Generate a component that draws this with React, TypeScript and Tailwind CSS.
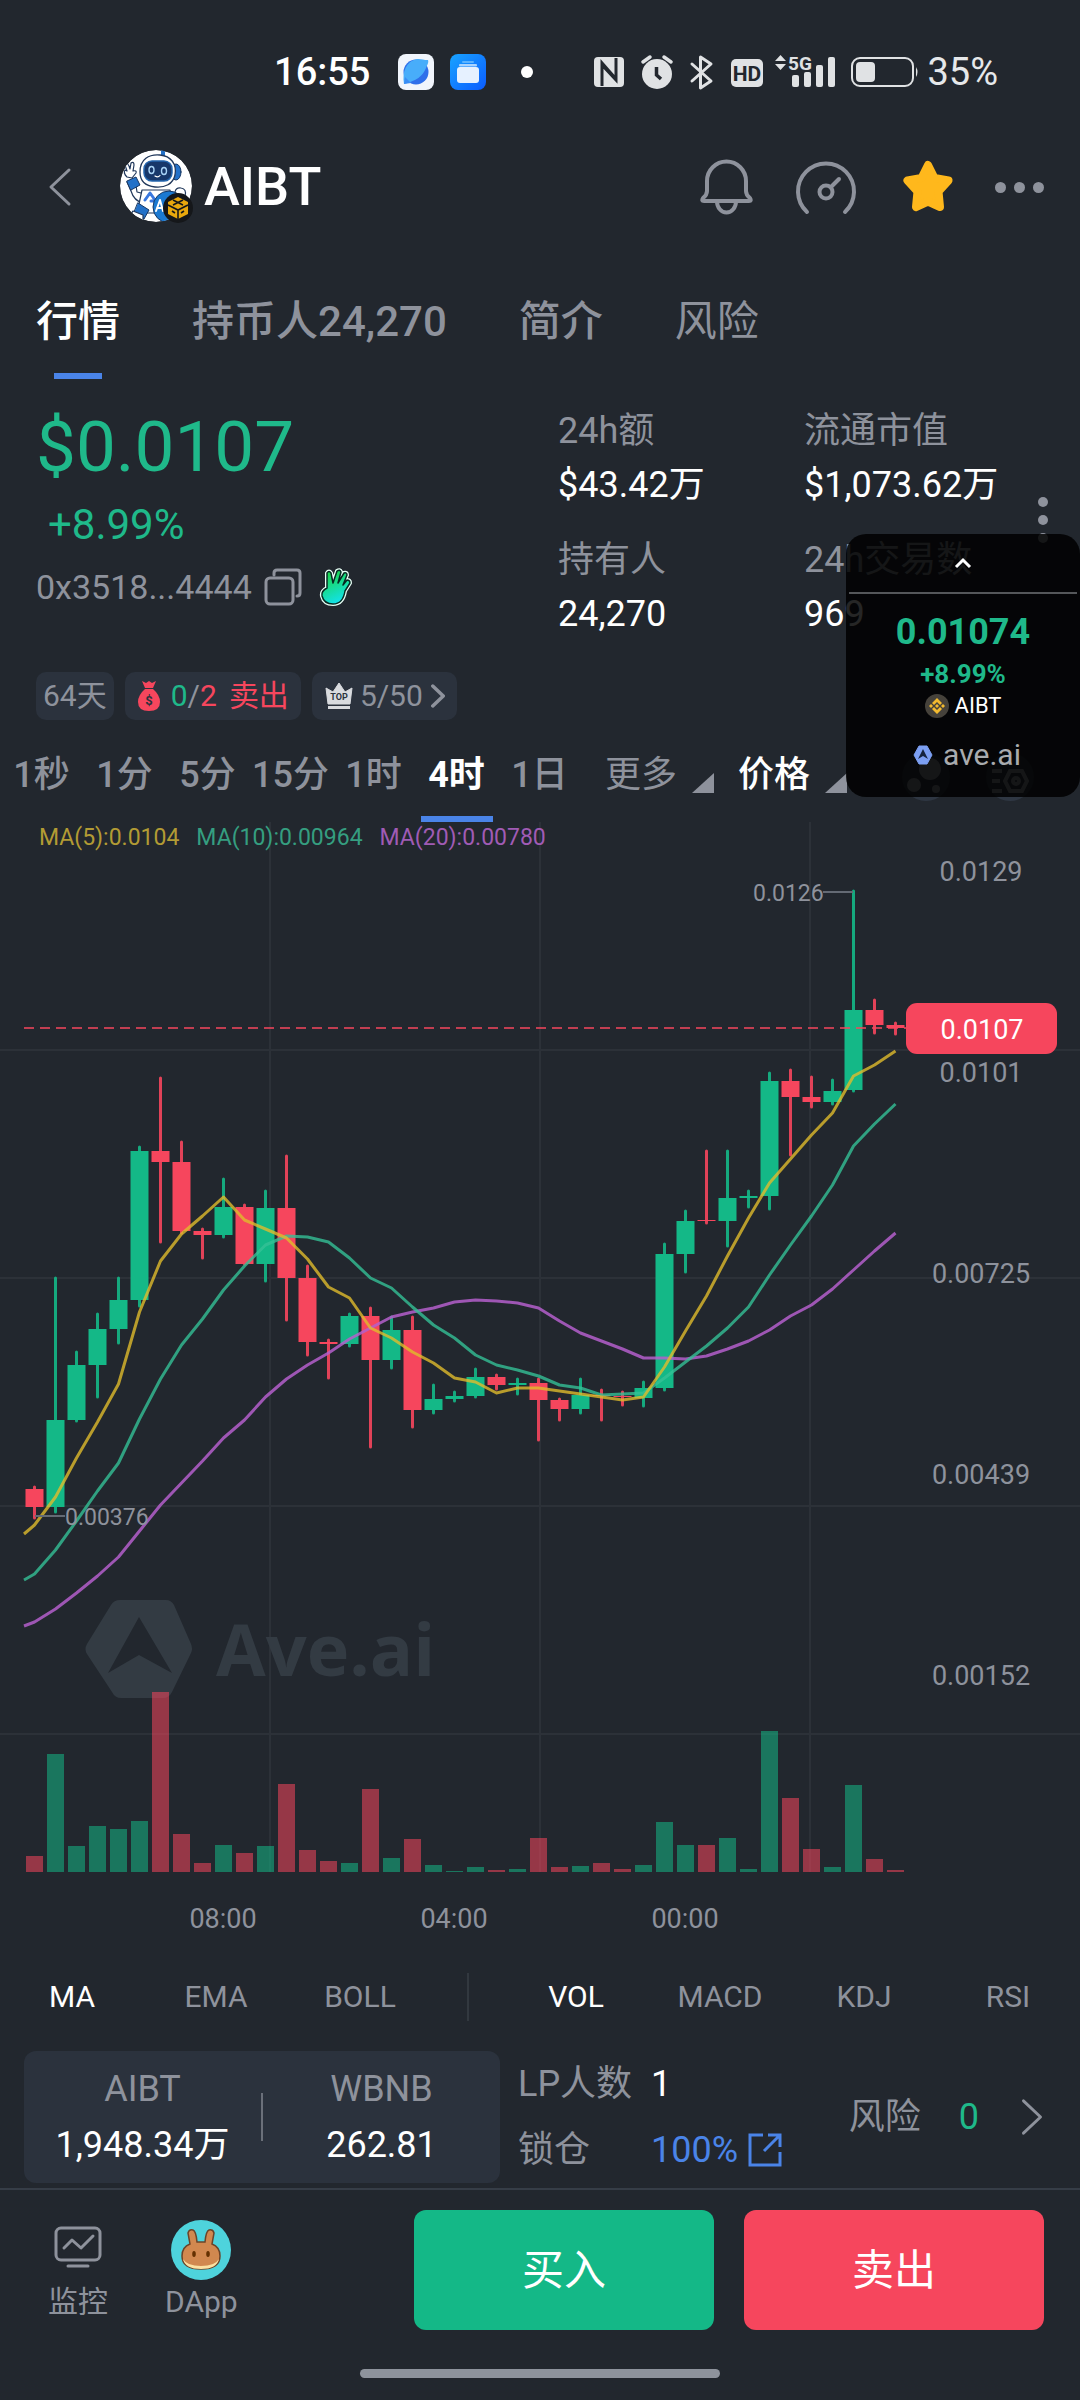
import React from "react";

const UP = "#14b887";
const DOWN = "#f6465d";

type Candle = [dir: "u" | "d", top: number, bottom: number, high: number, low: number, volumeTop: number];

const CANDLES: Candle[] = [
  ["d", 1488, 1506, 1486, 1517, 1855],
  ["u", 1419, 1506, 1277, 1511, 1753],
  ["u", 1364, 1419, 1351, 1420, 1845],
  ["u", 1328, 1364, 1313, 1396, 1825],
  ["u", 1299, 1328, 1277, 1342, 1828],
  ["u", 1150, 1299, 1146, 1305, 1820],
  ["d", 1150, 1161, 1077, 1241, 1691],
  ["d", 1161, 1230, 1141, 1232, 1833],
  ["d", 1230, 1234, 1228, 1257, 1862],
  ["u", 1206, 1234, 1178, 1236, 1844],
  ["d", 1206, 1263, 1204, 1263, 1852],
  ["u", 1207, 1263, 1190, 1280, 1845],
  ["d", 1207, 1277, 1155, 1319, 1783],
  ["d", 1277, 1341, 1265, 1354, 1849],
  ["d", 1341, 1343, 1339, 1377, 1860],
  ["u", 1315, 1343, 1313, 1345, 1862],
  ["d", 1315, 1359, 1307, 1446, 1788],
  ["u", 1329, 1359, 1316, 1367, 1857],
  ["d", 1329, 1409, 1316, 1426, 1838],
  ["u", 1398, 1409, 1384, 1412, 1864],
  ["u", 1395, 1398, 1391, 1400, 1870],
  ["u", 1376, 1395, 1368, 1396, 1866],
  ["d", 1376, 1384, 1374, 1388, 1869],
  ["u", 1382, 1384, 1378, 1393, 1868],
  ["d", 1382, 1399, 1378, 1439, 1837],
  ["d", 1399, 1408, 1398, 1419, 1866],
  ["u", 1394, 1408, 1378, 1412, 1865],
  ["d", 1394, 1395, 1389, 1419, 1862],
  ["d", 1395, 1396, 1391, 1404, 1868],
  ["u", 1387, 1397, 1381, 1405, 1864],
  ["u", 1253, 1387, 1243, 1389, 1821],
  ["u", 1220, 1253, 1210, 1271, 1844],
  ["d", 1219, 1220, 1150, 1222, 1844],
  ["u", 1197, 1220, 1150, 1245, 1837],
  ["u", 1195, 1197, 1190, 1206, 1868],
  ["u", 1080, 1195, 1072, 1208, 1730],
  ["d", 1080, 1096, 1069, 1154, 1797],
  ["d", 1096, 1101, 1076, 1106, 1848],
  ["u", 1090, 1101, 1079, 1103, 1866],
  ["u", 1009, 1089, 890, 1090, 1784],
  ["d", 1009, 1024, 999, 1032, 1858],
  ["d", 1024, 1027, 1022, 1033, 1869],
];

const MA5 = [1524, 1496, 1457, 1421, 1383, 1311, 1260, 1233, 1215, 1196, 1219, 1228, 1237, 1258, 1286, 1297, 1327, 1337, 1351, 1362, 1377, 1381, 1392, 1387, 1387, 1390, 1393, 1396, 1399, 1396, 1366, 1330, 1295, 1255, 1217, 1182, 1158, 1134, 1112, 1075, 1064, 1050];
const MA10 = [1573, 1549, 1520, 1490, 1462, 1418, 1378, 1344, 1318, 1289, 1265, 1244, 1235, 1236, 1241, 1257, 1277, 1287, 1306, 1324, 1337, 1354, 1364, 1369, 1375, 1384, 1387, 1394, 1393, 1392, 1377, 1361, 1345, 1327, 1306, 1274, 1244, 1215, 1184, 1145, 1123, 1103];
const MA20 = [1621, 1608, 1592, 1575, 1556, 1530, 1504, 1482, 1460, 1437, 1419, 1396, 1378, 1364, 1352, 1338, 1327, 1316, 1311, 1307, 1301, 1299, 1300, 1302, 1307, 1320, 1332, 1340, 1348, 1357, 1357, 1358, 1355, 1348, 1340, 1329, 1315, 1304, 1288, 1269, 1250, 1232];

const centre = (i: number) => 34.5 + i * 21;
const line = (start: number, ys: number[]) =>
  `24,${start} ` + ys.map((y, i) => `${centre(i)},${y}`).join(" ");

function Chart() {
  return (
    <svg viewBox="0 821 1080 1129" className="block h-auto w-full" role="img" aria-label="AIBT 4时 K线图">
      <g stroke="#2c3138" strokeWidth="2">
        {[270, 540, 810].map((x) => <line key={x} x1={x} x2={x} y1="821" y2="1871" />)}
        {[1049, 1277, 1505, 1733].map((y) => <line key={y} x1="0" x2="1080" y1={y} y2={y} />)}
      </g>

      <g fill="#333b43">
        <path d="M120 1599h46q5 0 8 5l17 39q2 5 0 9l-19 39q-3 6-9 6h-42q-6 0-9-6l-25-38q-3-5 0-10l24-39q3-5 9-5Z" />
        <path d="M139 1616l33 56-33-18-31 18Z" fill="#22272e" />
        <text x="216" y="1675" fontSize="72" fontWeight="700" fontFamily="Open Sans, sans-serif">Ave.ai</text>
      </g>

      {CANDLES.map(([dir, , , , , v], i) => (
        <rect key={i} x={centre(i) - 8.5} y={v} width="17" height={1871 - v} fill={dir === "u" ? UP : DOWN} opacity="0.55" />
      ))}

      {CANDLES.map(([dir, top, bottom, high, low], i) => {
        const c = dir === "u" ? UP : DOWN;
        return (
          <g key={i}>
            <line x1={centre(i)} x2={centre(i)} y1={high} y2={low} stroke={c} strokeWidth="3" strokeLinecap="round" opacity="0.9" />
            <rect x={centre(i) - 9} y={top} width="18" height={bottom - top} fill={c} />
          </g>
        );
      })}
      <line x1="24" x2="906" y1="1027" y2="1027" stroke={DOWN} strokeWidth="2" strokeDasharray="10 6" opacity="0.75" />

      <g fill="none" strokeWidth="3" strokeLinejoin="round">
        <polyline points={line(1625, MA20)} stroke="#b45fcb" opacity="0.85" />
        <polyline points={line(1579, MA10)} stroke="#35c096" opacity="0.8" />
        <polyline points={line(1533, MA5)} stroke="#e0bc2c" opacity="0.8" />
      </g>

      <g stroke="#646a74" strokeWidth="2">
        <line x1="823" x2="853" y1="891" y2="891" />
        <line x1="35" x2="65" y1="1515" y2="1515" />
      </g>
      <g fill="#8e929c" fontSize="23">
        <text x="753" y="900">0.0126</text>
        <text x="65" y="1524">0.00376</text>
      </g>

      <g fill="#8e929c" fontSize="27" textAnchor="middle">
        <text x="981" y="880">0.0129</text>
        <text x="981" y="1081">0.0101</text>
        <text x="981" y="1282">0.00725</text>
        <text x="981" y="1483">0.00439</text>
        <text x="981" y="1684">0.00152</text>
        <text x="223" y="1927">08:00</text>
        <text x="454" y="1927">04:00</text>
        <text x="685" y="1927">00:00</text>
      </g>
      <rect x="906" y="1002" width="151" height="51" rx="11" fill={DOWN} />
      <text x="982" y="1038" fill="#fff" fontSize="27" textAnchor="middle">0.0107</text>
    </svg>
  );
}

function StatusIcons() {
  return (
    <svg viewBox="591 52 330 40" className="h-10 w-[330px]" aria-hidden="true">
      <g fill="#e0e2e4">
        <rect x="594" y="57" width="30" height="30" rx="4" />
        <path d="M602 86V63l14 16V58M602 65v21M616 58v22l-14-15" fill="none" stroke="#22272e" strokeWidth="3" />
        <circle cx="657" cy="74" r="15" />
        <path d="M643 62l7-5M671 62l-7-5" stroke="#e0e2e4" strokeWidth="3.5" strokeLinecap="round" />
        <path d="M656.500 67v8l4.500 4" fill="none" stroke="#22272e" strokeWidth="3.500" />
        <path d="M692 64l19 17-10.500 7V57L711 64 692 81" fill="none" stroke="#e0e2e4" strokeWidth="3" strokeLinejoin="round" strokeLinecap="round" />
        <rect x="731" y="59" width="32" height="28" rx="5" />
        <text x="747" y="81" fill="#22272e" fontSize="21" fontWeight="700" textAnchor="middle">HD</text>
        <path d="M780.500 55l5.500 6h-11ZM780.500 70l5.500-6h-11Z" />
        <text x="788" y="70" fontSize="19" fontWeight="700">5G</text>
        <rect x="792" y="75" width="7" height="12" rx="2" />
        <rect x="804" y="72" width="7" height="15" rx="2" />
        <rect x="816" y="65" width="7" height="22" rx="2" />
        <rect x="828" y="57" width="7" height="30" rx="2" />
        <rect x="852" y="58" width="61" height="28" rx="8" fill="none" stroke="#e0e2e4" strokeWidth="2" />
        <rect x="856" y="62" width="19" height="20" rx="4" />
        <path d="M916 67q3 5 0 10Z" />
      </g>
    </svg>
  );
}

function CompassApp() {
  return (
    <svg viewBox="0 0 36 36" className="size-9" aria-hidden="true">
      <rect width="36" height="36" rx="8" fill="#f1f5fc" />
      <circle cx="18" cy="18" r="12.500" fill="#2f6fea" />
      <path d="M6 30C4 18 8 7 19 5c4-.5 6 1 11 1 1 3-1 5-2 8-3 8-10 13-22 16Z" fill="#48adfa" />
      <path d="M6 30l7-1-6-6Z" fill="#3a8df5" />
    </svg>
  );
}

function FolderApp() {
  return (
    <svg viewBox="0 0 36 36" className="size-9" aria-hidden="true">
      <defs>
        <linearGradient id="folder" x1="0" y1="0" x2="1" y2="1">
          <stop offset="0" stopColor="#18a3ff" />
          <stop offset="1" stopColor="#0b5cff" />
        </linearGradient>
      </defs>
      <rect width="36" height="36" rx="8" fill="url(#folder)" />
      <rect x="12" y="7" width="12" height="2" rx="1" fill="#5db4ff" />
      <rect x="9" y="10" width="18" height="2.500" rx="1" fill="#a9d4ff" />
      <rect x="7" y="13" width="22" height="16" rx="3" fill="#e6f1ff" />
    </svg>
  );
}

function RobotAvatar() {
  return (
    <svg viewBox="0 0 74 74" className="size-[74px]" aria-hidden="true">
      <defs>
        <clipPath id="face"><circle cx="36" cy="36" r="36" /></clipPath>
      </defs>
      <g clipPath="url(#face)" strokeLinejoin="round" strokeLinecap="round">
        <circle cx="36" cy="36" r="36" fill="#fff" />
        <path d="M17 42l8 2-2 9q-9-2-12-12l-4-9 8-3Z" fill="#fff" stroke="#22395c" strokeWidth="1.200" />
        <path d="M7 31l9-4 4 8-9 5Z" fill="#2371c8" stroke="#173763" strokeWidth="1" />
        <path d="M7 27q-4-4-2-7l2 1-2-6q2-3 4 1l1 3 1-6q3-2 3 2l-1 6q4-1 3 2l-4 5Z" fill="#fff" stroke="#22395c" strokeWidth="1.200" />
        <path d="M22 40h28l2 15-8 8H22l-3-9Z" fill="#fff" stroke="#22395c" strokeWidth="1.200" />
        <path d="M18 53l11 7-5 9-10-6Z" fill="#2371c8" stroke="#173763" strokeWidth="1" />
        <path d="M13 61l10 4v7H11q-2-7 2-11Z" fill="#fff" stroke="#22395c" strokeWidth="1.200" />
        <path d="M43 0v6" stroke="#2371c8" strokeWidth="4" />
        <ellipse cx="56" cy="22" rx="5" ry="8" fill="#2371c8" stroke="#173763" />
        <path d="M20 22C20 9 29 4 40 5s17 9 15 20c-2 9-10 13-20 12-9-1-15-5-15-15Z" fill="#fff" stroke="#22395c" strokeWidth="1.300" />
        <rect x="24" y="11" width="28" height="20" rx="8" fill="#17376a" stroke="#2566ae" strokeWidth="1.500" />
        <ellipse cx="31.500" cy="20" rx="2.500" ry="3.500" fill="none" stroke="#a8d2f5" strokeWidth="1.400" />
        <ellipse cx="44" cy="21" rx="2.500" ry="3.500" fill="none" stroke="#a8d2f5" strokeWidth="1.400" />
        <path d="M35 26q3 2 5-.5" fill="none" stroke="#fff" strokeWidth="1.200" />
        <path d="M25 50l5-7 5 7M31 51h4" fill="none" stroke="#3a78df" strokeWidth="3" />
        <circle cx="49" cy="57" r="16" fill="#1b79d1" stroke="#173763" />
        <path d="M36 61l4-11 3 11M37 58h5" fill="none" stroke="#fff" strokeWidth="2" />
        <path d="M55 42q1-5 6-4 6 1 4 8l-6 0Z" fill="#fff" stroke="#22395c" strokeWidth="1.200" />
      </g>
      <circle cx="58" cy="58" r="15" fill="#15171a" />
      <path d="M58 47l10 5v12l-10 5-10-5V52Z" fill="#e9a80d" />
      <path d="M48 55l10 5 10-5M58 60v9M53 50l10 5M63 50l-10 5M52 61l3 2M64 61l-3 2" stroke="#15171a" strokeWidth="1.600" fill="none" />
    </svg>
  );
}

function BellIcon() {
  return (
    <svg viewBox="0 0 58 58" className="size-[58px]" fill="none" stroke="#8e929c" strokeWidth="4" strokeLinecap="round" strokeLinejoin="round" aria-hidden="true">
      <path d="M10 33V23a19.500 19.500 0 0 1 39 0v10q0 4 4 7 2 3-1 3H7q-3 0-1-3 4-3 4-7Z" />
      <path d="M20 43.500a9.500 11 0 0 0 19 0" />
    </svg>
  );
}

function GaugeIcon() {
  return (
    <svg viewBox="0 0 62 58" className="h-[58px] w-[62px]" fill="none" stroke="#8e929c" strokeWidth="4" strokeLinecap="round" aria-hidden="true">
      <path d="M12 54a28 28 0 1 1 38 0" />
      <circle cx="31" cy="34" r="6.500" />
      <path d="M36 29l8-8" />
    </svg>
  );
}

function StarIcon() {
  return (
    <svg viewBox="0 0 58 58" className="size-[58px]" aria-hidden="true">
      <path d="M29 7l6.500 13 14 2.500-10 11 1.500 15.500-12-5.500L17 49l1.500-15.500-10-11 14-2.500Z" fill="#ffb81c" stroke="#ffb81c" strokeWidth="8" strokeLinejoin="round" />
    </svg>
  );
}

function CopyIcon() {
  return (
    <svg viewBox="0 0 38 38" className="size-[38px]" fill="none" stroke="#8e929c" strokeWidth="3" strokeLinecap="round" strokeLinejoin="round" aria-hidden="true">
      <rect x="2" y="10" width="27" height="26" rx="4" />
      <path d="M10 7V5q0-3 3-3h20q3 0 3 3v20q0 3-3 3" />
    </svg>
  );
}

function HandIcon() {
  return (
    <svg viewBox="0 0 34 38" className="h-[38px] w-[34px]" strokeLinejoin="round" aria-hidden="true">
      <defs>
        <linearGradient id="hand" x1="0" y1="0" x2="0.400" y2="1">
          <stop offset="0.200" stopColor="#1bd653" />
          <stop offset="1" stopColor="#12e2e6" />
        </linearGradient>
      </defs>
      <path d="M8 20L8 5q2-3 4 0l2 10 4-12q3-2 4 1l-3 11 6-10q3-1 3 2l-4 10 4-5q3 0 3 3l-5 8q-2 13-12 13-9 0-11-8-1-5 5-8Z" fill="none" stroke="#e8fff6" strokeWidth="4" />
      <path d="M8 20L8 5q2-3 4 0l2 10 4-12q3-2 4 1l-3 11 6-10q3-1 3 2l-4 10 4-5q3 0 3 3l-5 8q-2 13-12 13-9 0-11-8-1-5 5-8Z" fill="url(#hand)" stroke="#052a22" strokeWidth="1.500" />
    </svg>
  );
}

function MoneyBag() {
  return (
    <svg viewBox="0 0 24 30" className="h-[30px] w-6" aria-hidden="true">
      <path d="M5 0l4 2 3-2 3 2 4-2-3 7H8Z" fill={DOWN} />
      <path d="M8 8h8q7 6 7 13 0 9-11 9T1 21q0-7 7-13Z" fill={DOWN} />
      <text x="12" y="24" fontSize="13" fontWeight="700" fill="#2b323d" textAnchor="middle">$</text>
    </svg>
  );
}

function CrownIcon() {
  return (
    <svg viewBox="0 0 30 28" className="h-7 w-[30px]" aria-hidden="true">
      <path d="M2 6l7 4 6-9 6 9 7-4-2 16H4Z" fill="#d9dbdf" stroke="#d9dbdf" strokeLinejoin="round" />
      <rect x="4" y="24" width="22" height="3" fill="#d9dbdf" />
      <text x="15" y="18" fontSize="9" fontWeight="700" fill="#2b323d" textAnchor="middle">TOP</text>
    </svg>
  );
}

function Chevron({ className, width }: { className: string; width: number }) {
  return (
    <svg viewBox="0 0 24 40" className={className} fill="none" stroke="#8e929c" strokeWidth={width} strokeLinecap="round" strokeLinejoin="round" aria-hidden="true">
      <path d="M3 3l18 17L3 37" />
    </svg>
  );
}

function Triangle() {
  return (
    <svg viewBox="0 0 22 20" className="mt-4 h-5 w-[22px] shrink-0" aria-hidden="true">
      <path d="M22 0v20H0Z" fill="#8e929c" />
    </svg>
  );
}

function Stat({ label, value }: { label: string; value: string }) {
  return (
    <div className="text-4xl/11 whitespace-nowrap">
      <dt className="text-[#8e929c]">{label}</dt>
      <dd className="mt-[10px] text-white">{value}</dd>
    </div>
  );
}

function FloatingTicker() {
  return (
    <aside className="absolute top-[534px] right-0 flex w-[234px] flex-col items-center rounded-[20px] bg-black/85 pb-[22px]">
      <button aria-label="收起" className="flex h-[58px] w-full items-center justify-center">
        <svg viewBox="0 0 18 12" className="h-3 w-[18px]" fill="none" stroke="#fff" strokeWidth="3" aria-hidden="true">
          <path d="M2 10l7-7 7 7" />
        </svg>
      </button>
      <div className="h-[2px] w-[228px] bg-[#55575a]" />
      <div className="mt-4 text-4xl/11 font-bold text-[#1fb98a]">0.01074</div>
      <div className="mt-[2px] text-[26px]/9 font-bold text-[#1fb98a]">+8.99%</div>
      <div className="flex items-center gap-[6px] text-[22px]/7 text-white">
        <svg viewBox="0 0 24 24" className="size-6" aria-hidden="true">
          <circle cx="12" cy="12" r="12" fill="#46423b" />
          <path d="M12 4l5 5-2 2-3-3-3 3-2-2ZM12 20l5-5-2-2-3 3-3-3-2 2ZM12 10l2 2-2 2-2-2ZM6 10l2 2-2 2-2-2ZM18 10l2 2-2 2-2-2Z" fill="#f3ba2f" />
        </svg>
        AIBT
      </div>
      <div className="mt-[15px] flex items-center gap-[10px] pl-2 text-[30px]/10 text-[#a9abae]">
        <svg viewBox="0 0 20 20" className="size-5" aria-hidden="true">
          <path d="M6 1h8l5 9-5 9H6l-5-9Z" fill="#7c9ff2" stroke="#7c9ff2" strokeLinejoin="round" />
          <path d="M10 4l5 10-5-3-5 3Z" fill="#16243f" />
        </svg>
        ave.ai
      </div>
    </aside>
  );
}

const PERIODS = ["1秒", "1分", "5分", "15分", "1时", "4时", "1日"];

export default function App() {
  return (
    <main className="relative min-h-screen overflow-hidden bg-[#22272e] font-['Roboto','Noto_Sans_CJK_SC',sans-serif] text-[#8e929c]">
      <div className="flex items-center justify-end pt-[52px] pr-[82px] text-white">
        <span className="text-[38px]/10 font-medium">16:55</span>
        <span className="ml-7 flex gap-4"><CompassApp /><FolderApp /></span>
        <span className="ml-[35px] size-3 rounded-full bg-white" />
        <span className="ml-[58px]"><StatusIcons /></span>
        <span className="ml-[6px] text-[38px]/10 text-[#e6e8ea]">35%</span>
      </div>

      <header className="mt-[58px] flex items-center pr-9 pl-12">
        <button aria-label="返回">
          <Chevron className="h-11 w-6 rotate-180" width={3} />
        </button>
        <span className="ml-12"><RobotAvatar /></span>
        <h1 className="ml-[10px] text-[54px]/[72px] font-medium text-white">AIBT</h1>
        <div className="ml-auto flex items-center">
          <button aria-label="提醒"><BellIcon /></button>
          <button aria-label="仪表" className="ml-10"><GaugeIcon /></button>
          <button aria-label="收藏" className="ml-[42px]"><StarIcon /></button>
          <button aria-label="更多操作" className="ml-[38px] flex gap-2">
            <span className="size-[11px] rounded-full bg-[#8e929c]" />
            <span className="size-[11px] rounded-full bg-[#8e929c]" />
            <span className="size-[11px] rounded-full bg-[#8e929c]" />
          </button>
        </div>
      </header>

      <nav className="mt-[68px] flex gap-[72px] px-9 text-[42px]/[60px] font-medium">
        <button className="flex flex-col items-center text-white">
          行情
          <span className="mt-[21px] h-[6px] w-12 bg-[#4a84e8]" />
        </button>
        <button className="self-start">持币人24,270</button>
        <button className="self-start">简介</button>
        <button className="self-start font-normal">风险</button>
      </nav>

      <section className="flex pl-9">
        <div className="w-[522px] pt-[26px]">
          <div className="text-[71px]/[84px] text-[#1fb98a]">$0.0107</div>
          <div className="mt-3 pl-3 text-[42px]/12 text-[#1fb98a]">+8.99%</div>
          <div className="mt-4 flex items-center text-[34px]/11">
            0x3518...4444
            <button aria-label="复制地址" className="ml-3"><CopyIcon /></button>
            <span className="ml-[17px]"><HandIcon /></span>
          </div>
        </div>
        <dl className="grid grow grid-cols-[246px_1fr] content-start gap-y-[31px] pt-[30px]">
          <Stat label="24h额" value="$43.42万" />
          <Stat label="流通市值" value="$1,073.62万" />
          <Stat label="持有人" value="24,270" />
          <Stat label="24h交易数" value="969" />
        </dl>
        <button aria-label="更多数据" className="mt-[118px] mr-8 flex flex-col gap-2 self-start">
          <span className="size-[10px] rounded-full bg-[#8e929c]" />
          <span className="size-[10px] rounded-full bg-[#8e929c]" />
          <span className="size-[10px] rounded-full bg-[#8e929c]" />
        </button>
      </section>

      <div className="mt-9 flex gap-[11px] px-9 text-[30px]/12">
        <span className="rounded-[10px] bg-[#2b323d] px-[7px]">64天</span>
        <span className="flex items-center rounded-[10px] bg-[#2b323d] px-3 text-[#f6465d]">
          <MoneyBag />
          <span className="ml-[10px] text-[#1fb98a]">0</span>
          <span className="text-[#8e929c]">/</span>
          <span>2</span>
          <span className="ml-3">卖出</span>
        </span>
        <button className="flex items-center rounded-[10px] bg-[#2b323d] px-3">
          <CrownIcon />
          <span className="mr-2 ml-[6px]">5/50</span>
          <Chevron className="h-6 w-[14px]" width={6} />
        </button>
      </div>

      <nav className="mt-[33px] flex text-4xl/11 font-medium">
        {PERIODS.map((p) => (
          <button key={p} className={p === "4时" ? "flex w-[83px] flex-col items-center font-bold text-white" : "w-[83px] self-start"}>
            {p}
            {p === "4时" && <span className="mt-[19px] h-[6px] w-[72px] bg-[#4a84e8]" />}
          </button>
        ))}
        <button className="ml-6 flex items-center gap-[15px] self-start font-normal">更多<Triangle /></button>
        <button className="ml-6 flex items-center gap-[15px] self-start text-white">价格<Triangle /></button>
        <div className="mr-[46px] ml-auto flex gap-9">
          <button aria-label="气泡图" className="flex size-12 items-center justify-center self-start rounded-full bg-[#2f3743]">
            <svg viewBox="0 0 40 40" className="size-10" fill="#8e929c" aria-hidden="true">
              <circle cx="24" cy="12" r="11" /><circle cx="8" cy="28" r="7" /><circle cx="30" cy="32" r="4" />
            </svg>
          </button>
          <button aria-label="图表设置" className="flex size-12 items-center justify-center self-start rounded-full bg-[#2f3743]">
            <svg viewBox="0 0 40 40" className="size-10" fill="none" stroke="#8e929c" strokeWidth="4" aria-hidden="true">
              <path d="M2 14h10M2 24h8M2 34h10M20 14h12l5 10-5 10H20l-5-10Z" /><circle cx="26" cy="24" r="3" />
            </svg>
          </button>
        </div>
      </nav>

      <section className="relative">
        <Chart />
        <div className="absolute top-0 left-[39px] flex gap-[17px] text-[23px]/8">
          <span className="text-[#b29b34]">MA(5):0.0104</span>
          <span className="text-[#359e80]">MA(10):0.00964</span>
          <span className="text-[#a05bb5]">MA(20):0.00780</span>
        </div>
      </section>

      <nav className="mt-[22px] flex items-center text-[30px]/12">
        <button className="flex-[2_1_0%] text-white">MA</button>
        <button className="flex-[2_1_0%]">EMA</button>
        <button className="flex-[2_1_0%]">BOLL</button>
        <span className="flex flex-[1_1_0%] justify-center"><span className="h-12 w-[2px] bg-[#32383f]" /></span>
        <button className="flex-[2_1_0%] text-white">VOL</button>
        <button className="flex-[2_1_0%]">MACD</button>
        <button className="flex-[2_1_0%]">KDJ</button>
        <button className="flex-[2_1_0%]">RSI</button>
      </nav>

      <section className="mt-[30px] flex items-center pr-9 pl-6 text-4xl/11 whitespace-nowrap">
        <div className="flex w-[476px] items-center rounded-xl bg-[#2b323d] py-4 text-center">
          <div className="flex-1">
            <div>AIBT</div>
            <div className="mt-3 text-white">1,948.34万</div>
          </div>
          <span className="h-12 w-[2px] bg-[#6b707a]" />
          <div className="flex-1">
            <div>WBNB</div>
            <div className="mt-3 text-white">262.81</div>
          </div>
        </div>
        <dl className="ml-[18px] grid grid-cols-[133px_1fr] gap-y-[22px]">
          <dt>LP人数</dt>
          <dd className="text-white">1</dd>
          <dt>锁仓</dt>
          <dd>
            <a href="#lock" className="flex items-center gap-[10px] text-[#4a84e8]">
              100%
              <svg viewBox="0 0 34 34" className="size-[34px]" fill="none" stroke="#4a84e8" strokeWidth="3" aria-hidden="true">
                <path d="M15 2H2v30h30V19M20 2h12v12M32 2L16 18" />
              </svg>
            </a>
          </dd>
        </dl>
        <button className="ml-auto flex items-center">
          风险
          <span className="ml-[38px] text-[#1fb98a]">0</span>
          <Chevron className="ml-[41px] h-[38px] w-6" width={3} />
        </button>
      </section>

      <footer className="mt-[5px] border-t-2 border-[#363d47] px-9 pt-5 pb-5">
        <div className="flex">
          <button className="mt-2 flex w-[84px] flex-col items-center self-start text-[30px]/9">
            <svg viewBox="0 0 48 44" className="mt-2 h-11 w-12" fill="none" stroke="#8e929c" strokeWidth="3" strokeLinecap="round" strokeLinejoin="round" aria-hidden="true">
              <rect x="2" y="2" width="44" height="32" rx="5" />
              <path d="M10 22l8-8 9 8 12-12M14 40h20" />
            </svg>
            <span className="mt-[14px]">监控</span>
          </button>
          <button className="mt-[10px] ml-[45px] flex flex-col items-center self-start text-[30px]/9">
            <svg viewBox="0 0 60 60" className="size-[60px]" aria-hidden="true">
              <circle cx="30" cy="30" r="30" fill="#4ed3dc" />
              <g fill="#d1884f" stroke="#6b4429" strokeWidth="1.500">
                <path d="M11 36q0-9 8-12l-2-11q1-4 5-3 3 1 4 12h8q1-11 4-12 4-1 5 3l-2 11q8 3 8 12 0 13-19 13T11 36Z" />
              </g>
              <path d="M12 39q4 7 18 7t18-7q-2 10-18 10t-18-10Z" fill="#fbe0a1" />
              <ellipse cx="23" cy="34" rx="1.800" ry="3" fill="#633001" />
              <ellipse cx="37" cy="34" rx="1.800" ry="3" fill="#633001" />
            </svg>
            <span className="mt-1">DApp</span>
          </button>
          <button className="ml-auto h-[120px] w-[300px] rounded-xl bg-[#14b887] text-[42px] text-white">买入</button>
          <button className="ml-[30px] h-[120px] w-[300px] rounded-xl bg-[#f6465d] text-[42px] text-white">卖出</button>
        </div>
        <div className="mx-auto mt-[39px] h-[9px] w-[360px] rounded-full bg-[#8e939c]" />
      </footer>

      <FloatingTicker />
    </main>
  );
}
